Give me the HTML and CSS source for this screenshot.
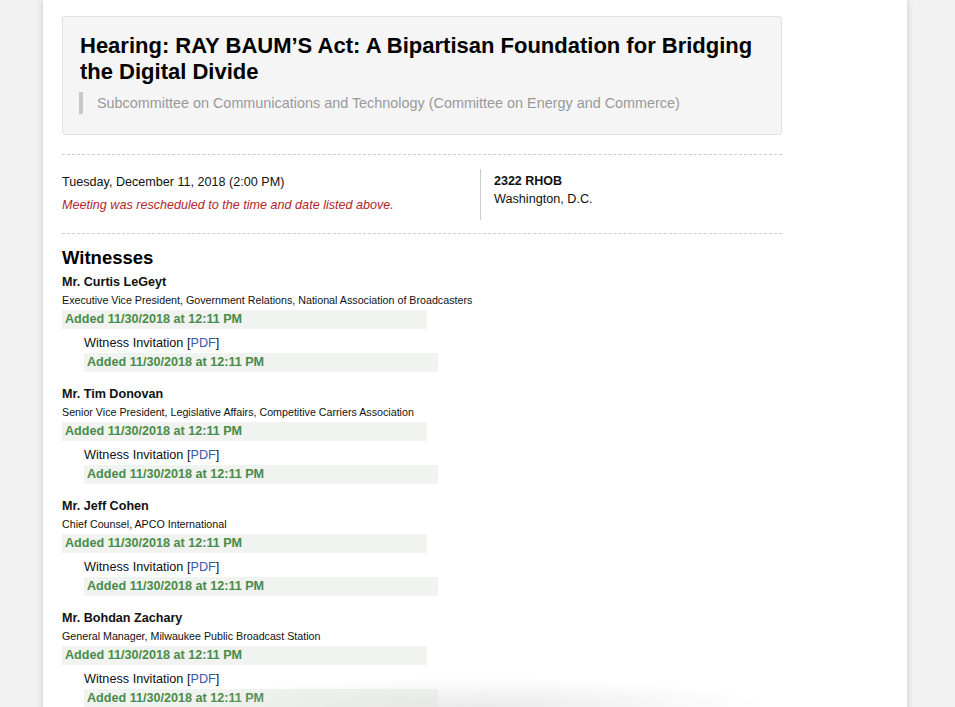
FILE: index.html
```html
<!DOCTYPE html>
<html lang="en">
<head>
    <meta charset="UTF-8">
    <meta name="viewport" content="width=device-width, initial-scale=1.0">
    <title>Hearing: RAY BAUM'S Act</title>
    <link rel="stylesheet" href="styles.css">
</head>
<body>
    <div class="page">
        <div class="hearing-box">
            <h1>Hearing: RAY BAUM’S Act: A Bipartisan Foundation for Bridging the Digital Divide</h1>
            <p class="committee">Subcommittee on Communications and Technology (Committee on Energy and Commerce)</p>
        </div>

        <div class="meeting-info">
            <div class="when">
                <p class="date">Tuesday, December 11, 2018 (2:00 PM)</p>
                <p class="notice">Meeting was rescheduled to the time and date listed above.</p>
            </div>
            <div class="where">
                <strong>2322 RHOB</strong><br>
                Washington, D.C.
            </div>
        </div>

        <h2>Witnesses</h2>

        <div class="witness">
            <div class="name">Mr. Curtis LeGeyt</div>
            <div class="position">Executive Vice President, Government Relations, National Association of Broadcasters</div>
            <div class="added">Added 11/30/2018 at 12:11 PM</div>
            <div class="document">
                <div class="doc-title">Witness Invitation [<a href="#">PDF</a>]</div>
                <div class="added">Added 11/30/2018 at 12:11 PM</div>
            </div>
        </div>

        <div class="witness">
            <div class="name">Mr. Tim Donovan</div>
            <div class="position">Senior Vice President, Legislative Affairs, Competitive Carriers Association</div>
            <div class="added">Added 11/30/2018 at 12:11 PM</div>
            <div class="document">
                <div class="doc-title">Witness Invitation [<a href="#">PDF</a>]</div>
                <div class="added">Added 11/30/2018 at 12:11 PM</div>
            </div>
        </div>

        <div class="witness">
            <div class="name">Mr. Jeff Cohen</div>
            <div class="position">Chief Counsel, APCO International</div>
            <div class="added">Added 11/30/2018 at 12:11 PM</div>
            <div class="document">
                <div class="doc-title">Witness Invitation [<a href="#">PDF</a>]</div>
                <div class="added">Added 11/30/2018 at 12:11 PM</div>
            </div>
        </div>

        <div class="witness">
            <div class="name">Mr. Bohdan Zachary</div>
            <div class="position">General Manager, Milwaukee Public Broadcast Station</div>
            <div class="added">Added 11/30/2018 at 12:11 PM</div>
            <div class="document">
                <div class="doc-title">Witness Invitation [<a href="#">PDF</a>]</div>
                <div class="added">Added 11/30/2018 at 12:11 PM</div>
            </div>
        </div>
    </div>

    <div class="bottom-fade"></div>
</body>
</html>
```

FILE: styles.css
```css
body {
    font-family: 'Liberation Sans', Arial, sans-serif;
    background-color: #f2f2f2;
    color: #111;
    margin: 0;
    padding: 0;
    overflow: hidden;
}

.page {
    width: 845px;
    min-height: 1200px;
    margin-left: 43px;
    padding: 16px 0 0 19px;
    background-color: #fff;
    box-shadow: 0 0 7px rgba(0, 0, 0, 0.18);
}

.page > * {
    width: 720px;
}

.hearing-box {
    box-sizing: border-box;
    background-color: #f5f5f5;
    border: 1px solid #e1e1e1;
    border-radius: 3px;
    padding: 16px 16px 20px 16px;
}

h1 {
    margin: 0 0 7px 1px;
    font-size: 22px;
    line-height: 26px;
    font-weight: bold;
    color: #000;
}

.committee {
    margin: 0;
    border-left: 4px solid #c8c8c8;
    padding-left: 14px;
    font-size: 14.4px;
    line-height: 22px;
    color: #999;
}

.meeting-info {
    display: grid;
    grid-template-columns: 419px 1fr;
    margin-top: 19px;
    padding: 14px 0 13px;
    border-top: 1px dashed #ccc;
    border-bottom: 1px dashed #ccc;
}

.when {
    border-right: 1px solid #ccc;
    min-height: 51px;
}

.date {
    margin: 4px 0 0;
    font-size: 12.6px;
    line-height: 18px;
}

.notice {
    margin: 5px 0 0;
    font-size: 12.6px;
    line-height: 18px;
    font-style: italic;
    color: #b3262b;
}

.where {
    padding: 3px 0 0 13px;
    font-size: 12.65px;
    line-height: 18px;
}

.where strong {
    font-size: 12.5px;
}

h2 {
    margin: 13px 0 4px;
    font-size: 18.5px;
    line-height: 22px;
    color: #000;
}

.witness {
    margin-bottom: 13px;
}

.name {
    font-size: 12.6px;
    font-weight: bold;
    line-height: 18px;
}

.position {
    font-size: 10.7px;
    line-height: 18px;
}

.added {
    box-sizing: border-box;
    width: 50.7%;
    height: 19px;
    margin-top: 1px;
    padding: 0 3px;
    background-color: #f0f3ef;
    color: #4a8a4a;
    font-size: 12.6px;
    font-weight: bold;
    line-height: 19px;
}

.document {
    margin-left: 22px;
    margin-top: 4px;
}

.document .added {
    margin-top: 0;
}

.doc-title {
    font-size: 12.7px;
    line-height: 20px;
}

.doc-title a {
    color: #3b56b0;
    text-decoration: none;
}

.bottom-fade {
    position: fixed;
    left: 180px;
    right: 180px;
    bottom: 0;
    height: 30px;
    background: radial-gradient(ellipse at 50% 100%, rgba(225, 225, 225, 0.7), rgba(255, 255, 255, 0) 70%);
    pointer-events: none;
}
```
